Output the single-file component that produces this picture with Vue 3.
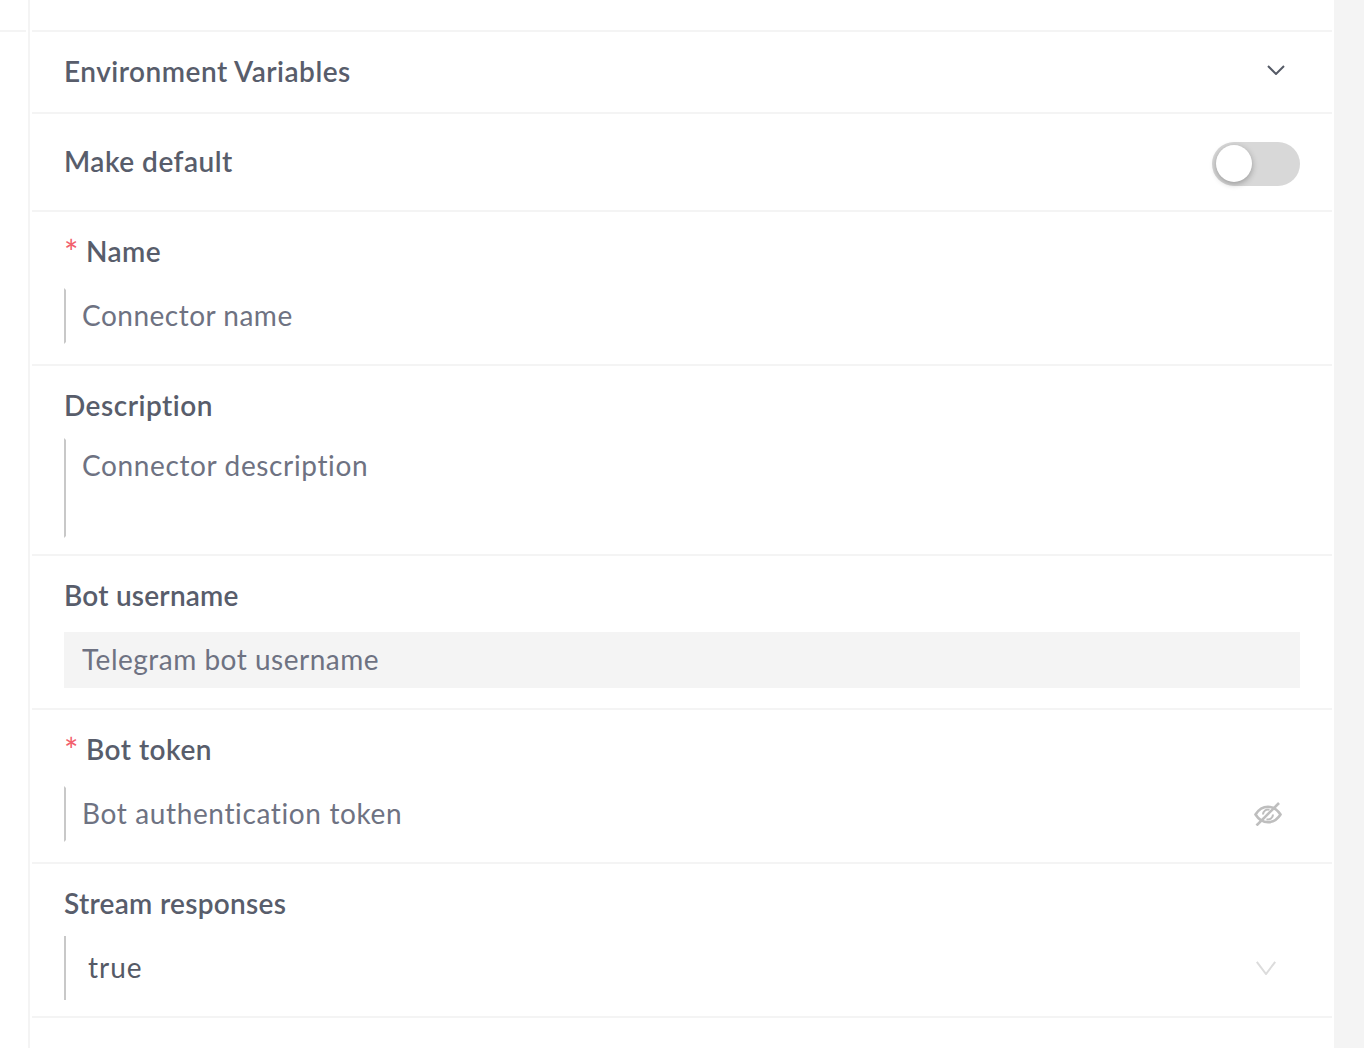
<script setup>
</script>

<template>
  <div class="page">
    <aside class="side"><div class="side-line"></div></aside>
    <main class="panel">
      <div class="row top"></div>

      <div class="row inline env">
        <span class="label">Environment Variables</span>
        <svg class="chevron" width="18" height="10" viewBox="0 0 18 10" fill="none">
          <path d="M1 1l8 8 8-8" stroke="#555a66" stroke-width="2" />
        </svg>
      </div>

      <div class="row inline def">
        <span class="label">Make default</span>
        <span class="toggle"><span class="knob"></span></span>
      </div>

      <div class="row field">
        <label class="label"><span class="req">*</span>Name</label>
        <input class="input" placeholder="Connector name" />
      </div>

      <div class="row field tight desc">
        <label class="label">Description</label>
        <textarea class="input area wide" placeholder="Connector description"></textarea>
      </div>

      <div class="row field">
        <label class="label narrow">Bot username</label>
        <input class="input filled" placeholder="Telegram bot username" />
      </div>

      <div class="row field">
        <label class="label"><span class="req">*</span>Bot token</label>
        <div class="with-icon">
          <input class="input wide" placeholder="Bot authentication token" />
          <svg class="eye" width="28" height="24" viewBox="0 0 28 24" fill="none" stroke="#bebebe" stroke-width="2.600">
            <path d="M1.500 12.500C5 7 9 4.800 14 4.800S23 7 26.500 12.500C23 18 19 20.200 14 20.200S5 18 1.500 12.500Z" />
            <path d="M9 12.500a5 5 0 0 1 6.500-4.800M19 12.500a5 5 0 0 1-6.500 4.800" stroke-width="2" />
            <path d="M2.500 23.500L25 1" />
          </svg>
        </div>
      </div>

      <div class="row field tight">
        <label class="label stream">Stream responses</label>
        <div class="select">
          <span class="value">true</span>
          <svg width="20" height="14" viewBox="0 0 20 14" fill="none">
            <path d="M.8.800L10 13 19.200.800" stroke="#dcdcdc" stroke-width="2" />
          </svg>
        </div>
      </div>
    </main>
    <div class="gutter"></div>
  </div>
</template>

<style>
html, body { margin: 0; background: #fff; }
</style>

<style scoped>
.page {
  display: flex;
  height: 1048px;
  overflow: hidden;
  background: #fff;
  font-family: Lato, "Liberation Sans", sans-serif;
  letter-spacing: 0.5px;
}
.side { width: 28px; flex: none; }
.side-line { width: 26px; height: 2px; margin-top: 30px; background: #f4f4f4; }
.panel {
  flex: none;
  width: 1300px;
  padding: 0 2px;
  border-left: 2px solid #f4f4f4;
}
.gutter { flex: 1; background: #f4f4f4; }
.row {
  box-sizing: border-box;
  border-bottom: 2px solid #f4f4f4;
  padding: 0 32px;
  height: 154px;
}
.top { height: 32px; }
.inline { display: flex; align-items: center; justify-content: space-between; }
.env { height: 82px; }
.def { height: 98px; }
.desc { height: 190px; }
.label {
  display: block;
  padding-bottom: 2px;
  font-size: 28px;
  line-height: 36px;
  font-weight: 600;
  color: #585d6b;
}
.narrow { letter-spacing: 0.22px; }
.stream { letter-spacing: 0.29px; }
.field { padding-top: 21px; }
.field .label { margin-bottom: 17px; }
.tight .label { margin-bottom: 13px; }
.req {
  color: #f2606c;
  font-size: 34px;
  line-height: 0;
  vertical-align: -3px;
  margin-left: 0;
  margin-right: 7px;
  font-weight: 400;
}
.input {
  display: block;
  box-sizing: border-box;
  width: 100%;
  height: 56px;
  margin: 0;
  padding: 0 16px 2px;
  border: 2px solid transparent;
  border-left-color: #c8c8c8;
  border-radius: 0;
  outline: 0;
  background: #fff;
  font-family: inherit;
  font-size: 28px;
  letter-spacing: inherit;
  color: #555a66;
  resize: none;
}
.wide { letter-spacing: 0.63px; }
.input::placeholder { color: #6e7282; opacity: 1; }
.area { height: 100px; padding-top: 7px; line-height: 36px; }
.filled { background: #f4f4f4; border-left-color: transparent; }
.with-icon { position: relative; }
.eye { position: absolute; right: 18px; top: 16px; }
.select {
  display: flex;
  align-items: center;
  justify-content: space-between;
  box-sizing: border-box;
  height: 64px;
  padding: 0 24px 2px 22px;
  border-left: 2px solid #c8c8c8;
  font-size: 28px;
  color: #555a66;
}
.value { letter-spacing: 1px; }
.select svg { margin-top: 2px; }
.env .chevron { margin: -4px 15px 0 0; }
.def .toggle { margin-top: 4px; }
.toggle {
  position: relative;
  display: block;
  width: 88px;
  height: 44px;
  border-radius: 22px;
  background: #d8d8d8;
}
.knob {
  position: absolute;
  left: 4px;
  top: 3px;
  width: 36px;
  height: 37px;
  border-radius: 50%;
  background: #fff;
  box-shadow: 0 2px 6px rgba(0, 0, 0, 0.3);
}
</style>
